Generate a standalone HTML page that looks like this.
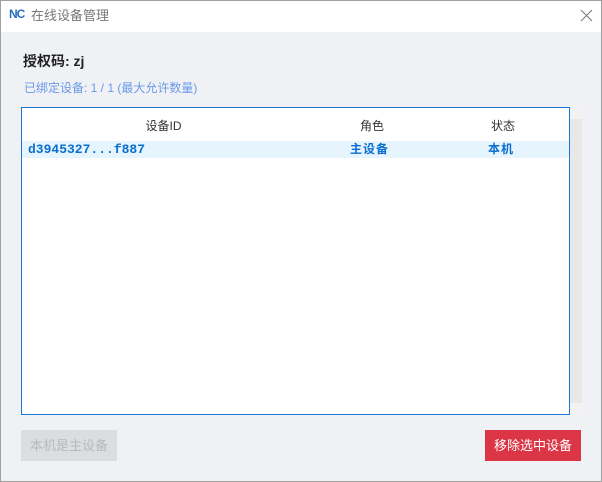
<!DOCTYPE html>
<html><head><meta charset="utf-8"><style>
*{margin:0;padding:0;box-sizing:border-box}
body{width:602px;height:482px;background:#eff0f4;font-family:"Liberation Sans","Noto Sans CJK SC",sans-serif;position:relative;overflow:hidden}
.win{position:absolute;left:0;top:0;width:602px;height:482px;border:1px solid #a0a0a0;background:#eff1f5}
.title{position:absolute;left:0;top:0;width:600px;height:31px;background:#fff}
.abs{position:absolute}
</style></head><body>
<div class="win">
<div class="title">
 <div class="abs" style="left:8px;top:7px;width:17px;height:14px;font:bold 12px/12px 'Liberation Sans',sans-serif;color:#2a6cc0;letter-spacing:-1px">NC</div>
 <div class="abs" style="left:30px;top:7px;font-size:13px;color:#777;line-height:16px">在线设备管理</div>
 <svg class="abs" style="left:579px;top:8px" width="13" height="13"><path d="M1 1L12 12M12 1L1 12" stroke="#777" stroke-width="1"/></svg>
</div>
<div class="abs" style="left:22px;top:51px;font-size:14px;font-weight:bold;color:#222;line-height:18px">授权码: zj</div>
<div class="abs" style="left:23px;top:79px;font-size:12px;color:#6b9ae8;line-height:16px">已绑定设备: 1 / 1 (最大允许数量)</div>
<div class="abs" style="left:20px;top:106px;width:549px;height:308px;background:#fff;border:1px solid #1a78d6">
 <div class="abs" style="left:0;top:9px;width:283px;text-align:center;font-size:12px;color:#333">设备ID</div>
 <div class="abs" style="left:330px;top:9px;width:40px;text-align:center;font-size:12px;color:#333">角色</div>
 <div class="abs" style="left:461px;top:9px;width:40px;text-align:center;font-size:12px;color:#333">状态</div>
 <div class="abs" style="left:0;top:33px;width:547px;height:17px;background:#e5f4fd"></div>
 <div class="abs" style="left:6px;top:34px;font:bold 13px/15px 'Liberation Mono',monospace;color:#0a6fd0">d3945327...f887</div>
 <div class="abs" style="left:328px;top:34px;font-size:12px;font-weight:bold;color:#0a6fd0;line-height:15px;letter-spacing:1px">主设备</div>
 <div class="abs" style="left:466px;top:34px;font-size:12px;font-weight:bold;color:#0a6fd0;line-height:15px;letter-spacing:1px">本机</div>
</div>
<div class="abs" style="left:569px;top:106px;width:12px;height:308px;background:#e8e8e8">
 <div class="abs" style="left:0;top:0;width:12px;height:12px;background:#f2f2f2"></div>
 <div class="abs" style="left:0;bottom:0;width:12px;height:12px;background:#f2f2f2"></div>
</div>
<div class="abs" style="left:20px;top:429px;width:96px;height:31px;background:#dcdde0;color:#b8b9bc;font-size:13px;text-align:center;line-height:31px">本机是主设备</div>
<div class="abs" style="left:484px;top:429px;width:96px;height:31px;background:#dc3545;color:#fff;font-size:13px;text-align:center;line-height:31px">移除选中设备</div>
</div>
</body></html>
